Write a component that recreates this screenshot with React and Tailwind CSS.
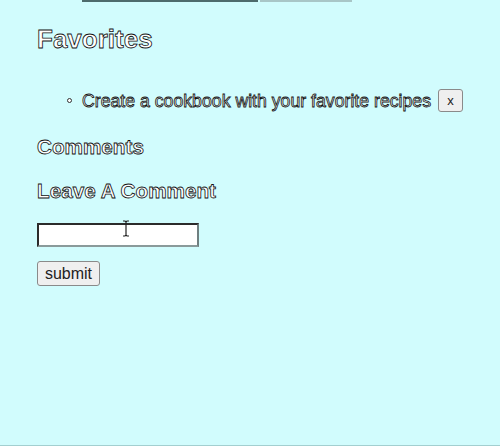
import React from 'react';

const outline = 'text-white [-webkit-text-stroke:0.8px_#111]';

const App = () => {
  return (
    <div className="h-[446px] overflow-hidden bg-[#d1fcfd] border-b border-[#a3cfd0] font-['Liberation_Sans',Arial,sans-serif]">
      {/* leftover edge of the element scrolled off above */}
      <div className="flex ml-[82px] gap-[2px]">
        <div className="w-[176px] h-[2px] bg-[#4d6b6c]" />
        <div className="w-[92px] h-[2px] bg-[#a8c6c7]" />
      </div>

      <div className="px-[37px]">
        <h1 className={`mt-[22px] text-[26px] leading-[30px] font-bold ${outline}`}>Favorites</h1>

        <ul className="mt-[35px] ml-[30px]">
          <li className="flex items-center h-[23px]">
            <span className="w-[5px] h-[5px] rounded-full border border-[#333] bg-white" />
            <span className={`ml-[10px] text-[17.7px] leading-[20px] ${outline}`}>
              Create a cookbook with your favorite recipes
            </span>
            <button className="ml-[7px] w-[25px] h-[23px] rounded-[3px] border border-[#8a8a8a] bg-[#efefef] text-[13px] text-[#222]">
              x
            </button>
          </li>
        </ul>

        <h3 className={`mt-[23px] text-[20.7px] leading-[24px] font-bold ${outline}`}>Comments</h3>
        <h3 className={`mt-[20px] text-[20.7px] leading-[24px] font-bold ${outline}`}>Leave A Comment</h3>

        <div className="relative mt-[20px] w-[162px] h-[24px]">
          <input
            type="text"
            className="w-full h-full bg-white border-2 border-t-[#2b2b2b] border-l-[#2b2b2b] border-r-[#6f7f80] border-b-[#8a9a9a] outline-none"
          />
          {/* I-beam cursor */}
          <svg className="absolute left-[85px] -top-[3px]" width="8" height="17" viewBox="0 0 8 17">
            <path d="M1 1h2l1 1 1-1h2M4 2v13M1 16h2l1-1 1 1h2" fill="none" stroke="#222" strokeWidth="1.2" />
          </svg>
        </div>

        <button className="mt-[14px] w-[63px] h-[25px] rounded-[3px] border border-[#8a8a8a] bg-[#efefef] text-[16px] leading-none text-[#222]">
          submit
        </button>
      </div>
    </div>
  );
};

export default App;
